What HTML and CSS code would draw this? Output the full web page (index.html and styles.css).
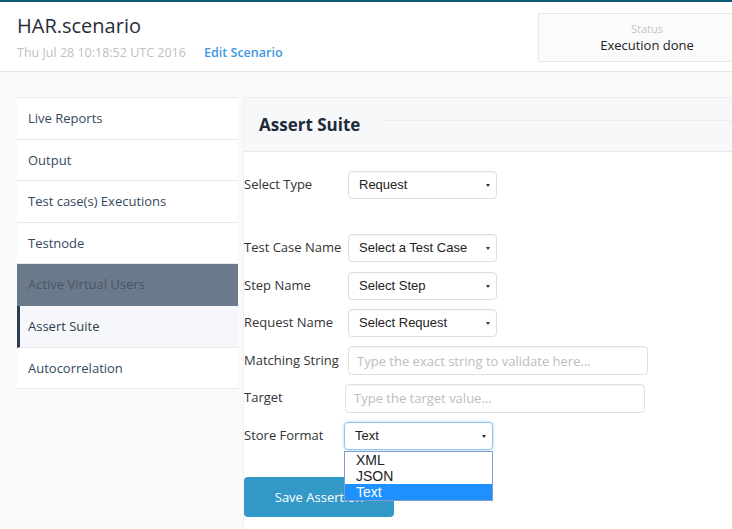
FILE: index.html
```html
<!DOCTYPE html>
<html>
<head>
  <title>HAR.scenario</title>
  <link rel="stylesheet" href="styles.css">
</head>
<body>
  <div class="scenario-header">
    <div class="scenario-info">
      <h1>HAR.scenario</h1>
      <div class="scenario-meta">
        <span class="scenario-date">Thu Jul 28 10:18:52 UTC 2016</span>
        <a class="edit-link" href="#">Edit Scenario</a>
      </div>
    </div>
    <div class="status-box">
      <div class="status-label">Status</div>
      <div class="status-value">Execution done</div>
    </div>
  </div>

  <div class="scenario-content">
    <ul class="side-menu">
      <li>Live Reports</li>
      <li>Output</li>
      <li>Test case(s) Executions</li>
      <li>Testnode</li>
      <li class="hovered">Active Virtual Users</li>
      <li class="active">Assert Suite</li>
      <li>Autocorrelation</li>
    </ul>

    <div class="panel">
      <div class="panel-heading">
        <h2>Assert Suite</h2>
        <span class="heading-rule"></span>
      </div>

      <form class="assert-form">
        <div class="form-row first">
          <label>Select Type</label>
          <div class="select-box">Request</div>
        </div>

        <div class="form-row">
          <label>Test Case Name</label>
          <div class="select-box">Select a Test Case</div>
        </div>
        <div class="form-row">
          <label>Step Name</label>
          <div class="select-box">Select Step</div>
        </div>
        <div class="form-row">
          <label>Request Name</label>
          <div class="select-box">Select Request</div>
        </div>
        <div class="form-row">
          <label>Matching String</label>
          <input type="text" placeholder="Type the exact string to validate here...">
        </div>
        <div class="form-row">
          <label>Target</label>
          <input type="text" class="shift" placeholder="Type the target value...">
        </div>
        <div class="form-row">
          <label>Store Format</label>
          <div class="select-box focused">
            Text
            <ul class="select-options">
              <li>XML</li>
              <li>JSON</li>
              <li class="selected">Text</li>
            </ul>
          </div>
        </div>

        <button type="button" class="save-btn">Save Assertion</button>
      </form>
    </div>
  </div>
</body>
</html>
```

FILE: styles.css
```css
body {
  margin: 0;
  padding: 0;
  font-family: "Open Sans", sans-serif;
  background-color: #fafafa;
  color: #333;
  overflow: hidden;
}

.scenario-header {
  display: flex;
  align-items: flex-start;
  height: 69px;
  padding-left: 17px;
  background-color: white;
  border-top: 2px solid #0b5a74;
  border-bottom: 1px solid #e6e6e6;
}

.scenario-info {
  flex: 1;
}

.scenario-info h1 {
  margin: 10px 0 0 0;
  font-size: 20px;
  font-weight: normal;
  line-height: 27px;
  color: #2a2c3a;
}

.scenario-meta {
  margin-top: 5px;
  font-size: 12.5px;
  line-height: 18px;
}

.scenario-date {
  color: #c0c0c0;
}

.edit-link {
  margin-left: 15px;
  color: #3d97e6;
  font-weight: 600;
  text-decoration: none;
}

.status-box {
  flex-shrink: 0;
  width: 216px;
  height: 47px;
  margin-top: 11px;
  margin-right: -24px;
  background-color: #fbfbfb;
  border: 1px solid #e8e8e8;
  text-align: center;
}

.status-label {
  margin-top: 8px;
  font-size: 11px;
  line-height: 14px;
  color: #c4c4cc;
}

.status-value {
  font-size: 13px;
  line-height: 18px;
  color: #222;
}

.scenario-content {
  display: flex;
  align-items: flex-start;
  padding-top: 25px;
  padding-left: 17px;
}

.side-menu {
  width: 221px;
  margin: 0;
  padding: 0;
  list-style: none;
  border-top: 1px solid #ececec;
}

.side-menu li {
  height: 40.6px;
  line-height: 40.6px;
  padding-left: 11px;
  font-size: 13px;
  color: #34495e;
  background-color: white;
  border-bottom: 1px solid #eaeaea;
}

.side-menu li.hovered {
  background-color: #6b7a8a;
  color: #4a5666;
  border-bottom-color: #6b7a8a;
}

.side-menu li.active {
  padding-left: 8px;
  background-color: #f6f7fa;
  border-left: 3px solid #2c3e50;
  color: #2c3e50;
}

.panel {
  flex: 1;
  min-height: 440px;
  margin-left: 5px;
  background-color: white;
  border-left: 1px solid #efefef;
  border-top: 1px solid #ececec;
}

.panel-heading {
  display: flex;
  align-items: center;
  height: 53px;
  padding-left: 15px;
  background-color: #f7f8fa;
  border-bottom: 1px solid #e8e9ec;
}

.panel-heading h2 {
  margin: 0;
  font-size: 17px;
  font-weight: bold;
  color: #1d2a3a;
}

.heading-rule {
  flex: 1;
  height: 1px;
  margin-left: 22px;
  margin-top: -8px;
  background-color: #eceef2;
}

.assert-form {
  position: relative;
  padding-top: 19px;
}

.form-row {
  display: flex;
  align-items: center;
  height: 28px;
  margin-bottom: 9.6px;
}

.form-row.first {
  margin-bottom: 35px;
}

.form-row label {
  width: 104px;
  flex-shrink: 0;
  font-size: 13px;
  margin-top: -2px;
  color: #333;
}

.select-box {
  position: relative;
  box-sizing: border-box;
  width: 149px;
  height: 28px;
  line-height: 26px;
  padding-left: 10px;
  font-family: "Liberation Sans", Arial, sans-serif;
  font-size: 13px;
  color: #222;
  border: 1px solid #dedede;
  border-radius: 4px;
  box-shadow: inset 0 1px 1px rgba(0, 0, 0, 0.04);
}

.select-box::after {
  content: "";
  position: absolute;
  right: 6px;
  top: 12px;
  border-left: 2px solid transparent;
  border-right: 2px solid transparent;
  border-top: 3px solid #333;
}

.select-box.focused {
  margin-left: -4px;
  border-color: #8ec3ef;
  box-shadow: 0 0 3px rgba(102, 175, 233, 0.6);
}

.select-options {
  position: absolute;
  top: 28px;
  left: -1px;
  width: 147px;
  margin: 0;
  padding: 0;
  list-style: none;
  background-color: white;
  border: 1px solid #7f9ccc;
  z-index: 2;
}

.select-options li {
  height: 16px;
  line-height: 16px;
  padding-left: 11px;
  font-size: 14px;
  color: #222;
}

.select-options li.selected {
  background-color: #1e90ff;
  color: white;
}

input[type="text"] {
  box-sizing: border-box;
  width: 300px;
  height: 29px;
  padding: 0 8px;
  font-family: "Open Sans", sans-serif;
  font-size: 13px;
  border: 1px solid #e0e0e0;
  border-radius: 4px;
  box-shadow: inset 0 1px 1px rgba(0, 0, 0, 0.04);
}

input.shift {
  margin-left: -3px;
}

input::placeholder {
  color: #bdbdbd;
}

.save-btn {
  width: 150px;
  height: 40px;
  margin-top: 17px;
  background-color: #3399c9;
  color: white;
  border: none;
  border-radius: 4px;
  font-family: "Open Sans", sans-serif;
  font-size: 13px;
}
```
